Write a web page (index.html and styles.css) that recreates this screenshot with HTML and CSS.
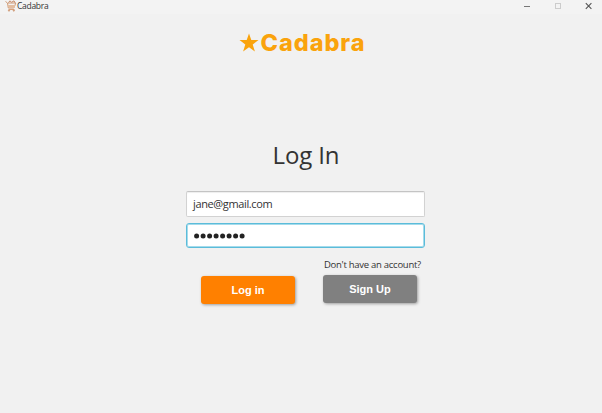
FILE: index.html
```html
<!DOCTYPE html>
<html lang="en">
<head>
<meta charset="utf-8">
<title>Cadabra</title>
<link rel="stylesheet" href="styles.css">
</head>
<body>
<header class="titlebar">
  <svg class="app-icon" width="12" height="12" viewBox="0 0 12 12" fill="none" stroke="#cf9a76" stroke-width="1">
    <path d="M.5 1.5 2.5 3l.8 5h5.5l2-5H3"/>
    <path d="M3 5.5h7l-1 2H4z" fill="#e3bd9f" stroke="#e3bd9f"/>
    <path d="M3.5 2.5 5 .8l1.5 1.5L9 .8l1 2" stroke="#c58a66"/>
    <path d="M3.5 9.5h6" stroke="#d8a27c"/>
    <circle cx="4" cy="10.6" r=".6" fill="#d8a27c"/><circle cx="8.8" cy="10.6" r=".6" fill="#d8a27c"/>
  </svg>
  <span class="title">Cadabra</span>
  <svg class="controls" width="68" height="12" viewBox="0 0 68 12" fill="none">
    <path d="M1 6.5h6" stroke="#777"/>
    <rect x="32.5" y="3.5" width="5" height="5" stroke="#ccc"/>
    <path d="m62.8 3.2 5.6 5.6m0-5.6-5.6 5.6" stroke="#555" stroke-width="1.1"/>
  </svg>
</header>
<main class="page">
  <div class="brand">
    <svg class="star" width="20" height="19" viewBox="0 0 20 19"><path fill="#faa30c" d="m10 .5 2.3 6.6h7.2l-5.8 4.3 2.2 7.1-5.9-4.3-5.9 4.3 2.2-7.1L.5 7.1h7.2z"/></svg>
    <span class="wordmark">Cadabra</span>
  </div>
  <h1 class="heading">Log In</h1>
  <form class="form">
    <div class="field"><span class="email">jane@gmail.com</span></div>
    <div class="field focused"><svg width="52" height="6" viewBox="0 0 52 6" fill="#222"><circle cx="2.6" cy="3" r="2.5"/><circle cx="9.1" cy="3" r="2.5"/><circle cx="15.6" cy="3" r="2.5"/><circle cx="22.1" cy="3" r="2.5"/><circle cx="28.6" cy="3" r="2.5"/><circle cx="35.1" cy="3" r="2.5"/><circle cx="41.6" cy="3" r="2.5"/><circle cx="48.1" cy="3" r="2.5"/></svg></div>
    <div class="actions">
      <button type="button" class="button login">Log in</button>
      <div class="signup-group">
        <span class="hint">Don't have an account?</span>
        <button type="button" class="button signup">Sign Up</button>
      </div>
    </div>
  </form>
</main>
</body>
</html>
```
FILE: styles.css
```css
* { box-sizing: border-box; }
body {
  margin: 0;
  height: 413px;
  overflow: hidden;
  background: #f1f1f1;
  font-family: "Open Sans", sans-serif;
  color: #333;
}
.titlebar {
  display: flex;
  align-items: center;
  height: 14px;
  padding: 0 11px 2px 5px;
  background: #f3f3f3;
}
.title { font-size: 8.5px; line-height: 12px; letter-spacing: -.3px; white-space: nowrap; }
.controls { margin-left: auto; overflow: visible; }
.page { display: flex; flex-direction: column; align-items: center; }
.brand { display: flex; align-items: center; width: 125px; height: 26px; margin-top: 16px; }
.star { flex: none; margin-top: -1px; }
.wordmark {
  margin-left: 2px;
  font: 800 23.5px/26px Inter, sans-serif;
  letter-spacing: .95px;
  color: #faa30c;
  white-space: nowrap;
}
.heading { margin: 83px 0 0; padding-left: 10px; font-size: 24px; line-height: 32px; font-weight: 400; letter-spacing: -.15px; white-space: nowrap; }
.form { width: 239px; margin: 20px 0 0 9px; }
.field {
  display: flex;
  align-items: center;
  height: 26px;
  padding: 0 6px;
  border: 1px solid #d2d2d2;
  border-top-color: #c4c4c4;
  border-radius: 2px;
  background: #fff;
  box-shadow: inset 0 1px 1px #eee;
}
.email { font-size: 11px; line-height: 16px; letter-spacing: -.37px; white-space: nowrap; }
.focused { height: 25px; margin-top: 6px; border-color: #5bbcda; border-radius: 3px; box-shadow: inset 0 0 0 1px #a5dbeb; padding: 0 7px; }
.actions { display: flex; justify-content: space-between; align-items: flex-end; margin-top: 10px; padding: 0 8px 0 15px; }
.signup-group { display: flex; flex-direction: column; width: 94px; margin-bottom: 1px; }
.hint { padding-left: 1px; font-size: 9.5px; line-height: 14px; letter-spacing: -.27px; margin-bottom: 3px; white-space: nowrap; }
.button {
  width: 94px;
  height: 28px;
  padding: 0;
  border: 0;
  border-radius: 3px;
  font: bold 11px/28px "Liberation Sans", sans-serif;
  color: #fff;
  box-shadow: 1px 1px 3px rgba(0, 0, 0, .35);
}
.login { background: #ff8000; }
.signup { background: #808080; }
```
